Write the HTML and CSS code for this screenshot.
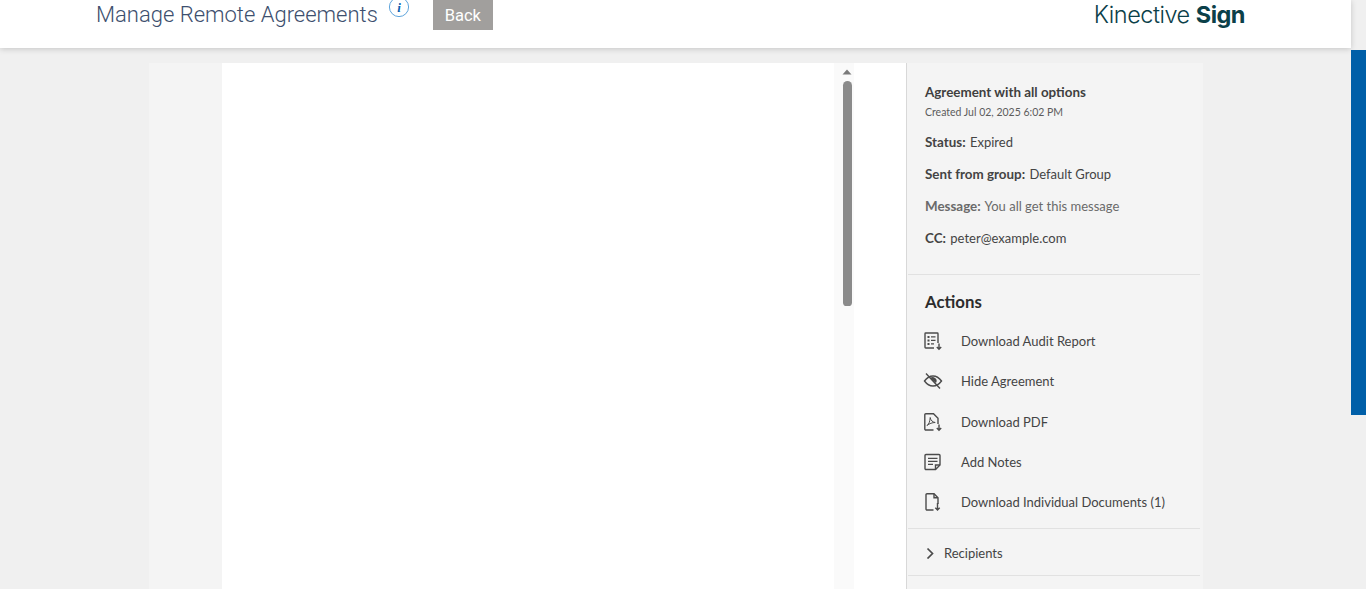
FILE: index.html
```html
<!DOCTYPE html>
<html lang="en">
<head>
<meta charset="utf-8">
<title>Manage Remote Agreements</title>
<link rel="stylesheet" href="styles.css">
</head>
<body>
<div class="page">
  <div class="main">
    <header class="topbar">
      <div class="title-group">
        <h1 class="title">Manage Remote Agreements</h1>
        <svg class="info" width="22" height="22" viewBox="0 0 22 22"><circle cx="11" cy="7" r="9.6" fill="none" stroke="#5fa5dc" stroke-width="1"/><text x="11" y="11.500" text-anchor="middle" class="info-i">i</text></svg>
        <button class="back">Back</button>
      </div>
      <div class="brand">Kinective <b>Sign</b></div>
    </header>
    <div class="content">
      <div class="panel">
        <div class="viewer">
          <div class="doc"></div>
          <div class="track">
            <svg class="arrow" width="10" height="6" viewBox="0 0 10 6"><path d="M5 .5 9.500 5.500H.5z" fill="#7a7a7a"/></svg>
            <div class="thumb"></div>
          </div>
          <div class="gutter"></div>
        </div>
        <aside class="side">
          <section class="info-block">
            <div class="name">Agreement with all options</div>
            <div class="created">Created Jul 02, 2025 6:02 PM</div>
            <div class="field"><b>Status:</b> Expired</div>
            <div class="field"><b>Sent from group:</b> Default Group</div>
            <div class="field muted"><b>Message:</b> You all get this message</div>
            <div class="field"><b>CC:</b> peter@example.com</div>
          </section>
          <section class="actions">
            <h2 class="actions-title">Actions</h2>
            <div class="action">
              <svg class="ico" width="20" height="20" viewBox="0 0 20 20"><g fill="none" stroke="#4b4b4b" stroke-width="1.400"><path d="M11 17H2.700a.7.7 0 0 1-.7-.7V2.700a.7.7 0 0 1 .7-.7h11.600a.7.7 0 0 1 .7.7V12"/><path d="M16 12.500V18M13.800 16l2.200 2.200 2.200-2.200"/></g><path d="M4.500 5h2v2h-2zM8 5.300h4.500v1.300H8zM4.500 8.500h2v2h-2zM8 8.800h4.500v1.300H8zM4.500 12h2v2h-2zM8 12.300h3v1.300H8z" fill="#4b4b4b"/></svg>
              <span>Download Audit Report</span>
            </div>
            <div class="action">
              <svg class="ico" width="20" height="20" viewBox="0 0 20 20"><g fill="none" stroke="#4b4b4b" stroke-width="1.400"><path d="M1.500 10C4 6.600 7 5 10 5s6 1.600 8.500 5C16 13.400 13 15 10 15s-6-1.600-8.500-5z"/><path d="M3 2.500l14 15"/></g><path d="M7 7.300a3.800 3.800 0 0 1 6 4.600z" fill="#4b4b4b"/></svg>
              <span>Hide Agreement</span>
            </div>
            <div class="action">
              <svg class="ico" width="20" height="20" viewBox="0 0 20 20"><g fill="none" stroke="#4b4b4b" stroke-width="1.400"><path d="M10.500 18H2.800a1 1 0 0 1-1-1V2.800a1 1 0 0 1 1-1h7.700l4.500 4.500V12"/><path d="M16 12.500V18M13.800 16l2.200 2.200 2.200-2.200"/><path d="M4 13.500c2-1.500 3-4 3.200-8 .6 3 2.200 4.500 5 5-2.800 0-5.800 1-8.200 3z" stroke-width="1"/></g></svg>
              <span>Download PDF</span>
            </div>
            <div class="action">
              <svg class="ico" width="20" height="20" viewBox="0 0 20 20"><g fill="none" stroke="#4b4b4b" stroke-width="1.400"><path d="M12.500 17.500H3a1 1 0 0 1-1-1V3.500a1 1 0 0 1 1-1h13a1 1 0 0 1 1 1V13z"/><path d="M12.500 17.500V13H17"/></g><path d="M5 5.700h9.500V7H5zM5 8.700h9.500V10H5zM5 11.700h5V13H5z" fill="#4b4b4b"/></svg>
              <span>Add Notes</span>
            </div>
            <div class="action">
              <svg class="ico" width="20" height="20" viewBox="0 0 20 20"><g fill="none" stroke="#4b4b4b" stroke-width="1.400"><path d="M10.500 18H4a1 1 0 0 1-1-1V2.800a1 1 0 0 1 1-1h7l4 4V12"/><path d="M11 1.800V5.800H15"/><path d="M14.500 11V18M12.300 15.800l2.200 2.200 2.200-2.200"/></g></svg>
              <span>Download Individual Documents (1)</span>
            </div>
          </section>
          <section class="recipients">
            <svg width="10" height="12" viewBox="0 0 10 12"><path d="M2.500 1.500 7.500 6.500 2.500 11.500" fill="none" stroke="#4b4b4b" stroke-width="1.700"/></svg>
            <span>Recipients</span>
          </section>
        </aside>
      </div>
    </div>
  </div>
  <div class="page-scroll"><div class="page-thumb"></div></div>
</div>
</body>
</html>
```
FILE: styles.css
```css
html, body { margin: 0; padding: 0; height: 100%; overflow: hidden; }
body { background: #f0f0f0; font-family: "Lato", "Open Sans", sans-serif; color: #3f3f3f; }
.page { display: flex; height: 589px; overflow: hidden; }
.main { flex: 1; min-width: 0; display: flex; flex-direction: column; }
.topbar { height: 48px; flex: none; background: #fff; box-shadow: 0 1px 6px rgba(0,0,0,.18); display: flex; justify-content: space-between; padding: 0 106px 0 96px; position: relative; }
.title-group { display: flex; align-items: flex-start; }
.title { margin: 0; font: 300 22px/29px "Roboto", sans-serif; color: #3d4f6e; }
.info { margin: 0 -1px 0 10px; }
.info-i { font: italic 700 13px "Liberation Serif", serif; fill: #0a5fb0; }
.back { margin: 0 0 0 24px; width: 60px; height: 30px; border: 0; padding: 0; background: #a19f9d; color: #fff; font: 400 16.500px "Roboto", sans-serif; }
.brand { font: 300 23.500px/30px "Inter", sans-serif; color: #0b4049; letter-spacing: -.5px; }
.brand b { font-weight: 700; }
.content { flex: 1; min-height: 0; padding: 15px 148px 0 149px; }
.panel { display: flex; height: 100%; }
.viewer { width: 758px; flex: none; display: flex; padding-left: 73px; background: #f4f4f4; box-sizing: border-box; }
.doc { width: 612px; flex: none; background: #fff; }
.track { width: 20px; flex: none; background: #fafafa; position: relative; padding-left: 8px; box-sizing: border-box; }
.arrow { display: block; position: absolute; top: 6px; left: 8px; }
.thumb { position: absolute; top: 18px; left: 9px; width: 9px; height: 225px; border-radius: 5px 5px 4px 4px; background: #8b8b8b; }
.gutter { flex: 1; background: #fff; border-right: 1px solid #d8d8d8; }
.side { flex: 1; background: #f4f4f4; }
.info-block { margin-right: 3px; padding: 21px 0 20px 17px; height: 212px; box-sizing: border-box; border-bottom: 1px solid #e1e1e1; margin-left: 1px; }
.name { font-size: 13.400px; line-height: 17px; font-weight: 700; color: #3f3f3f; }
.created { font-size: 10.500px; line-height: 15px; margin-top: 4px; color: #5c5c5c; }
.field { font-size: 13px; line-height: 18px; margin-top: 14px; color: #444; }
.created + .field { margin-top: 13px; }
.field b { margin-right: 1px; font-size: 13.400px; }
.muted { color: #6a6a6a; }
.actions { margin: 0 3px 0 1px; padding: 17px 0 0 17px; height: 254px; box-sizing: border-box; border-bottom: 1px solid #e1e1e1; }
.actions-title { margin: 0 0 9px; font-size: 16.800px; line-height: 20px; font-weight: 700; color: #2c2c2c; }
.action { display: flex; align-items: center; height: 40.250px; font-size: 13px; color: #444; }
.ico { width: 20px; height: 20px; margin: 0 18px 0 -2px; flex: none; }
.recipients { margin: 0 3px 0 1px; height: 47px; padding: 1px 0 0 17px; box-sizing: border-box; border-bottom: 1px solid #e1e1e1; display: flex; align-items: center; font-size: 13px; color: #444; }
.recipients svg { margin-right: 9px; }
.page-scroll { width: 15px; flex: none; position: relative; }
.page-thumb { position: absolute; top: 50px; left: 0; width: 15px; height: 365px; background: #005fa8; }
```
